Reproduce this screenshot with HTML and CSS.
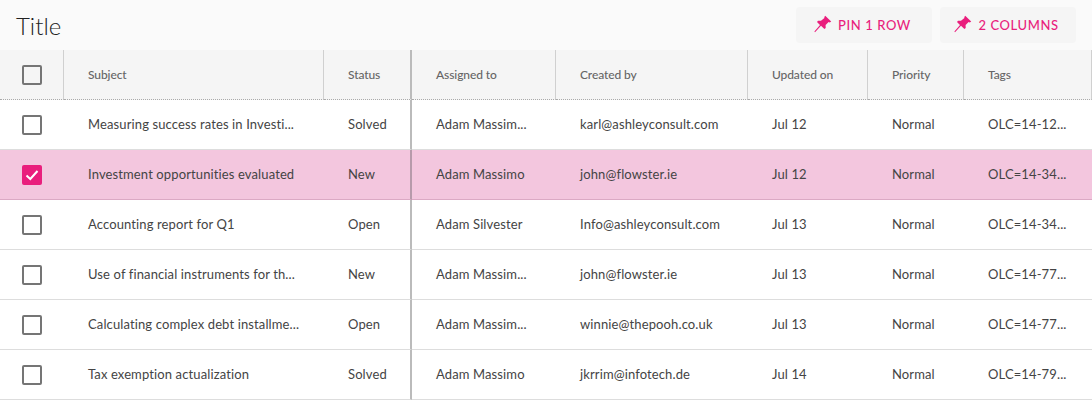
FILE: index.html
```html
<!DOCTYPE html>
<html lang="en">
<head>
  <meta charset="UTF-8">
  <title>Title</title>
  <link rel="stylesheet" href="styles.css">
</head>
<body>

  <svg class="icon-defs" width="0" height="0">
    <symbol id="pin" viewBox="0 0 18 18">
      <path d="M11.2 0.8 L17.2 6.6 L15.8 7.4 L14.6 6.9 L11.6 10 L11.7 13 L10.4 14 L7 10.8 L1 17.2 L0.4 16.6 L6 10 L3 7 L4 5.8 L7 5.8 L10.4 3 L10.3 2 Z"/>
    </symbol>
  </svg>

  <header class="top-bar">
    <h1 class="page-title">Title</h1>
    <div class="top-actions">
      <button class="pin-button"><svg class="pin-icon"><use href="#pin"/></svg>PIN 1 ROW</button>
      <button class="pin-button"><svg class="pin-icon"><use href="#pin"/></svg>2 COLUMNS</button>
    </div>
  </header>

  <table class="data-table">
    <colgroup>
      <col class="col-check">
      <col class="col-subject">
      <col class="col-status">
      <col class="col-assigned">
      <col class="col-created">
      <col class="col-updated">
      <col class="col-priority">
      <col class="col-tags">
    </colgroup>
    <thead>
      <tr>
        <th class="check-cell"><span class="checkbox"></span></th>
        <th>Subject</th>
        <th class="pinned-edge">Status</th>
        <th>Assigned to</th>
        <th>Created by</th>
        <th>Updated on</th>
        <th>Priority</th>
        <th>Tags</th>
      </tr>
    </thead>
    <tbody>
      <tr>
        <td class="check-cell"><span class="checkbox"></span></td>
        <td>Measuring success rates in Investi...</td>
        <td class="pinned-edge">Solved</td>
        <td>Adam Massim...</td>
        <td>karl@ashleyconsult.com</td>
        <td>Jul 12</td>
        <td>Normal</td>
        <td>OLC=14-12...</td>
      </tr>
      <tr class="selected">
        <td class="check-cell">
          <span class="checkbox checked">
            <svg viewBox="0 0 20 20" class="check-mark"><path d="M4.5 10.5 L8.3 14 L15.5 6"/></svg>
          </span>
        </td>
        <td>Investment opportunities evaluated</td>
        <td class="pinned-edge">New</td>
        <td>Adam Massimo</td>
        <td>john@flowster.ie</td>
        <td>Jul 12</td>
        <td>Normal</td>
        <td>OLC=14-34...</td>
      </tr>
      <tr>
        <td class="check-cell"><span class="checkbox"></span></td>
        <td>Accounting report for Q1</td>
        <td class="pinned-edge">Open</td>
        <td>Adam Silvester</td>
        <td>Info@ashleyconsult.com</td>
        <td>Jul 13</td>
        <td>Normal</td>
        <td>OLC=14-34...</td>
      </tr>
      <tr>
        <td class="check-cell"><span class="checkbox"></span></td>
        <td>Use of financial instruments for th...</td>
        <td class="pinned-edge">New</td>
        <td>Adam Massim...</td>
        <td>john@flowster.ie</td>
        <td>Jul 13</td>
        <td>Normal</td>
        <td>OLC=14-77...</td>
      </tr>
      <tr>
        <td class="check-cell"><span class="checkbox"></span></td>
        <td>Calculating complex debt installme...</td>
        <td class="pinned-edge">Open</td>
        <td>Adam Massim...</td>
        <td>winnie@thepooh.co.uk</td>
        <td>Jul 13</td>
        <td>Normal</td>
        <td>OLC=14-77...</td>
      </tr>
      <tr>
        <td class="check-cell"><span class="checkbox"></span></td>
        <td>Tax exemption actualization</td>
        <td class="pinned-edge">Solved</td>
        <td>Adam Massimo</td>
        <td>jkrrim@infotech.de</td>
        <td>Jul 14</td>
        <td>Normal</td>
        <td>OLC=14-79...</td>
      </tr>
    </tbody>
  </table>

</body>
</html>
```
FILE: styles.css
```css
body {
  margin: 0;
  font-family: Lato, "Noto Sans", sans-serif;
  background-color: #fff;
  color: #444;
  overflow: hidden;
}

.icon-defs {
  position: absolute;
}

.top-bar {
  display: flex;
  justify-content: space-between;
  align-items: center;
  height: 50px;
  padding: 0 16px;
  background-color: #fafafa;
}

.page-title {
  margin: 0;
  font-size: 24px;
  font-weight: 300;
  color: #222;
}

.top-actions {
  display: flex;
  gap: 8px;
}

.pin-button {
  display: flex;
  justify-content: center;
  align-items: center;
  gap: 6px;
  width: 136px;
  height: 36px;
  padding: 0 3px 0 0;
  background-color: #f5f5f5;
  border: none;
  border-radius: 4px;
  color: #e91e7d;
  font-family: inherit;
  font-size: 13px;
  font-weight: 500;
  letter-spacing: 0.6px;
}

.pin-icon {
  width: 18px;
  height: 18px;
  margin-top: -2px;
  fill: #e91e7d;
}

.data-table {
  width: 1092px;
  table-layout: fixed;
  border-collapse: separate;
  border-spacing: 0;
}

.col-check { width: 64px; }
.col-subject { width: 260px; }
.col-status { width: 88px; }
.col-assigned { width: 144px; }
.col-created { width: 192px; }
.col-updated { width: 120px; }
.col-priority { width: 96px; }
.col-tags { width: 128px; }

.data-table th {
  height: 50px;
  padding: 0 0 0 24px;
  box-sizing: border-box;
  background-color: #f5f5f5;
  border-right: 1px solid #d0d0d0;
  border-bottom: 1px dotted #aaa;
  color: #666;
  font-size: 12px;
  font-weight: 500;
  text-align: left;
  letter-spacing: -0.1px;
}

.data-table td {
  height: 50px;
  padding: 0 0 2px 24px;
  box-sizing: border-box;
  border-bottom: 1px solid #ddd;
  font-size: 13px;
  white-space: nowrap;
  overflow: hidden;
  letter-spacing: 0.12px;
}

.data-table th.check-cell,
.data-table td.check-cell {
  padding: 1px 0 0 22px;
}

.data-table th.pinned-edge,
.data-table td.pinned-edge {
  border-right: 2px solid #bbb;
}

.selected td {
  background-color: #f3c6de;
  border-bottom-color: #dba9c4;
}

.selected td.pinned-edge {
  border-right-color: #b79aab;
}

.checkbox {
  display: block;
  width: 20px;
  height: 20px;
  box-sizing: border-box;
  border: 2px solid #757575;
  border-radius: 2px;
}

.checkbox.checked {
  background-color: #e91e7d;
  border: none;
}

.check-mark {
  display: block;
  width: 20px;
  height: 20px;
  fill: none;
  stroke: #fff;
  stroke-width: 2;
}
```
